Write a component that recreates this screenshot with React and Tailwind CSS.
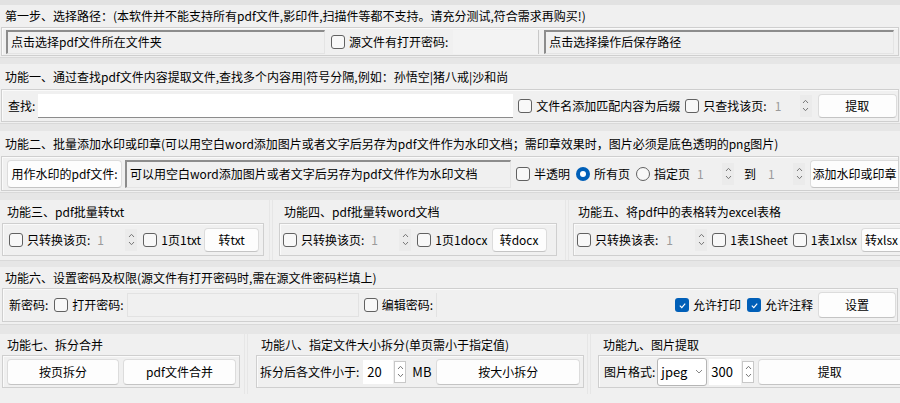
import React from "react";

const font = { fontFamily: '"Noto Sans CJK SC", "Microsoft YaHei", sans-serif' };

function Cb({ checked }) {
  if (checked) {
    return (
      <span className="inline-flex h-[14px] w-[14px] shrink-0 items-center justify-center rounded-[3px] bg-[#005fb8]">
        <svg width="9" height="9" viewBox="0 0 10 10">
          <path d="M2 5.2 L4.2 7.3 L8 3" fill="none" stroke="white" strokeWidth="1.3" />
        </svg>
      </span>
    );
  }
  return <span className="inline-block h-[14px] w-[14px] shrink-0 rounded-[3px] border border-[#616161] bg-[#f8f8f8]" />;
}

function Radio({ checked }) {
  if (checked) {
    return (
      <span className="inline-flex h-[14px] w-[14px] shrink-0 items-center justify-center rounded-full bg-[#005fb8]">
        <span className="h-[6px] w-[6px] rounded-full bg-white" />
      </span>
    );
  }
  return <span className="inline-block h-[14px] w-[14px] shrink-0 rounded-full border border-[#616161] bg-[#f8f8f8]" />;
}

function Arrows({ white }) {
  return (
    <span className={"flex h-[22px] w-[12px] shrink-0 flex-col items-center justify-center gap-[3px] " + (white ? "border border-[#c8c8c8] bg-white" : "bg-[#ebebeb]")}>
      <svg width="7" height="5" viewBox="0 0 7 5">
        <path d="M1 4 L3.5 1.3 L6 4" fill="none" stroke="#777" strokeWidth="1" />
      </svg>
      <svg width="7" height="5" viewBox="0 0 7 5">
        <path d="M1 1 L3.5 3.7 L6 1" fill="none" stroke="#777" strokeWidth="1" />
      </svg>
    </span>
  );
}

function Spin({ value, w }) {
  return (
    <span className={"flex h-[24px] shrink-0 items-center justify-between bg-[#f0f0f0] pl-[3px] " + w}>
      <span className="text-[#9a9a9a]">{value}</span>
      <Arrows />
    </span>
  );
}

function Btn({ children, w }) {
  return (
    <button className={"flex h-[24px] shrink-0 items-center justify-center rounded-[4px] border border-[#dcdcdc] border-b-[#c4c4c4] bg-[#fdfdfd] text-[12px] text-black " + w}>
      {children}
    </button>
  );
}

function Sunken({ children, w }) {
  return (
    <div className={"flex h-[24px] shrink-0 items-center overflow-hidden border-l-2 border-t-2 border-[#8c8c8c] border-r border-b border-r-[#e4e4e4] border-b-[#e4e4e4] bg-[#f0f0f0] pl-[3px] " + w}>
      {children}
    </div>
  );
}

function Title({ children, h }) {
  return <div className={"flex items-center pl-[5px] text-[12px] text-black " + h}>{children}</div>;
}

function Frame({ children, h, cls = "" }) {
  return (
    <div className={"flex items-center overflow-hidden border border-[#cfcfcf] shadow-[inset_1px_1px_0_#fafafa] " + h + " " + cls}>
      {children}
    </div>
  );
}

function Strip({ h }) {
  return <div className={"border-t border-[#d9d9d9] bg-[#e6e6e6] " + h} />;
}

function Check({ checked, label, cls = "" }) {
  return (
    <span className={"flex shrink-0 items-center gap-[4px] " + cls}>
      <Cb checked={checked} />
      <span>{label}</span>
    </span>
  );
}

export default function App() {
  return (
    <div className="h-[403px] w-[900px] overflow-hidden whitespace-nowrap bg-[#f0f0f0] text-[12px] leading-none text-black" style={font}>
      <div className="h-[5px] bg-[#e2e2e2]" />

      {/* step one */}
      <Title h="h-[22px]">第一步、选择路径：(本软件并不能支持所有pdf文件,影印件,扫描件等都不支持。请充分测试,符合需求再购买!)</Title>
      <Frame h="h-[29px]" cls="mx-[1px] px-[4px]">
        <Sunken w="w-[319px]">点击选择pdf文件所在文件夹</Sunken>
        <Check label="源文件有打开密码:" cls="ml-[6px]" />
        <span className="ml-[5px] h-[24px] w-[86px] shrink-0 border-r border-[#c8c8c8] bg-[#f3f3f3]" />
        <Sunken w="ml-[5px] flex-1">点击选择操作后保存路径</Sunken>
      </Frame>
      <div className="h-[1px]" />
      <Strip h="h-[7px]" />

      {/* one */}
      <Title h="h-[25px]">功能一、通过查找pdf文件内容提取文件,查找多个内容用|符号分隔,例如：孙悟空|猪八戒|沙和尚</Title>
      <Frame h="h-[33px]" cls="mx-[1px] pl-[6px] pr-[1px]">
        <span className="shrink-0">查找:</span>
        <span className="ml-[3px] h-[24px] w-[475px] shrink-0 border-b border-[#8c8c8c] bg-white" />
        <Check label="文件名添加匹配内容为后缀" cls="ml-[5px]" />
        <Check label="只查找该页:" cls="ml-[5px]" />
        <Spin value="1" w="ml-[5px] w-[40px]" />
        <Btn w="ml-[6px] flex-1">提取</Btn>
      </Frame>
      <div className="h-[1px]" />
      <Strip h="h-[8px]" />

      {/* two */}
      <Title h="h-[25px]">功能二、批量添加水印或印章(可以用空白word添加图片或者文字后另存为pdf文件作为水印文档；需印章效果时，图片必须是底色透明的png图片)</Title>
      <Frame h="h-[35px]" cls="mx-[1px] pl-[5px]">
        <Btn w="h-[28px] w-[115px]">用作水印的pdf文件:</Btn>
        <Sunken w="ml-[3px] h-[28px] w-[386px]">可以用空白word添加图片或者文字后另存为pdf文件作为水印文档</Sunken>
        <Check label="半透明" cls="ml-[5px]" />
        <span className="ml-[6px] flex shrink-0 items-center gap-[4px]">
          <Radio checked />
          <span>所有页</span>
        </span>
        <span className="ml-[6px] flex shrink-0 items-center gap-[4px]">
          <Radio />
          <span>指定页</span>
        </span>
        <Spin value="1" w="ml-[4px] w-[40px]" />
        <span className="ml-[10px] shrink-0">到</span>
        <Spin value="1" w="ml-[9px] w-[40px]" />
        <Btn w="ml-[5px] h-[28px] flex-1 rounded-r-none border-r-0">添加水印或印章</Btn>
      </Frame>
      <div className="h-[1px]" />
      <Strip h="h-[8px]" />

      {/* three / four / five */}
      <div className="flex h-[60px]">
        <div className="flex w-[269px] shrink-0 flex-col pl-[2px] pr-[5px]">
          <Title h="h-[23px] pl-[3px]">功能三、pdf批量转txt</Title>
          <Frame h="h-[33px]" cls="pl-[6px]">
            <Check label="只转换该页:" />
            <Spin value="1" w="ml-[4px] w-[43px]" />
            <Check label="1页1txt" cls="ml-[6px]" />
            <Btn w="ml-[3px] w-[55px]">转txt</Btn>
          </Frame>
        </div>
        <div className="w-[4px] shrink-0 border-x border-[#e6e6e6]" />
        <div className="flex w-[292px] shrink-0 flex-col pl-[6px] pr-[8px]">
          <Title h="h-[23px] pl-0">功能四、pdf批量转word文档</Title>
          <Frame h="h-[33px]" cls="pl-[3px]">
            <Check label="只转换该页:" />
            <Spin value="1" w="ml-[4px] w-[43px]" />
            <Check label="1页1docx" cls="ml-[6px]" />
            <Btn w="ml-[4px] w-[55px]">转docx</Btn>
          </Frame>
        </div>
        <div className="w-[4px] shrink-0 border-x border-[#e6e6e6]" />
        <div className="flex min-w-0 flex-1 flex-col pl-[4px]">
          <Title h="h-[23px] pl-[1px]">功能五、将pdf中的表格转为excel表格</Title>
          <Frame h="h-[33px]" cls="border-r-0 pl-[3px]">
            <Check label="只转换该表:" />
            <Spin value="1" w="ml-[5px] w-[44px]" />
            <Check label="1表1Sheet" cls="ml-[5px]" />
            <Check label="1表1xlsx" cls="ml-[5px]" />
            <Btn w="ml-[4px] w-[60px] rounded-r-none border-r-0 justify-start pl-[3px]">转xlsx</Btn>
          </Frame>
        </div>
      </div>
      <Strip h="h-[7px]" />

      {/* six */}
      <Title h="h-[21px]">功能六、设置密码及权限(源文件有打开密码时,需在源文件密码栏填上)</Title>
      <Frame h="h-[34px]" cls="mx-[2px] pl-[6px] pr-[1px]">
        <span className="shrink-0">新密码:</span>
        <Check label="打开密码:" cls="ml-[6px]" />
        <span className="ml-[3px] h-[24px] w-[232px] shrink-0 border border-[#e2e2e2] bg-[#f0f0f0]" />
        <Check label="编辑密码:" cls="ml-[5px]" />
        <span className="ml-[3px] h-[24px] w-[236px] shrink-0 border-l border-[#e2e2e2] bg-[#f0f0f0]" />
        <Check checked label="允许打印" cls="ml-[3px]" />
        <Check checked label="允许注释" cls="ml-[6px]" />
        <Btn w="ml-[5px] h-[26px] flex-1">设置</Btn>
      </Frame>
      <div className="h-[2px]" />
      <Strip h="h-[10px]" />

      {/* seven / eight / nine */}
      <div className="flex h-[60px]">
        <div className="flex w-[244px] shrink-0 flex-col pl-[2px] pr-[4px]">
          <Title h="h-[21px] pl-[3px]">功能七、拆分合并</Title>
          <Frame h="h-[33px]" cls="gap-[4px] pl-[4px] pr-[3px]">
            <Btn w="h-[26px] w-[112px]">按页拆分</Btn>
            <Btn w="h-[26px] flex-1">pdf文件合并</Btn>
          </Frame>
        </div>
        <div className="w-[4px] shrink-0 border-x border-[#e6e6e6]" />
        <div className="flex w-[339px] shrink-0 flex-col pl-[8px] pr-[3px]">
          <Title h="h-[21px] pl-[1px]">功能八、指定文件大小拆分(单页需小于指定值)</Title>
          <Frame h="h-[33px]" cls="pl-[3px] pr-[3px]">
            <span className="shrink-0">拆分后各文件小于:</span>
            <span className="ml-[4px] flex h-[24px] w-[30px] shrink-0 items-center bg-white pl-[4px] text-[13px]">20</span>
            <span className="ml-[1px]"><Arrows white /></span>
            <span className="ml-[6px] shrink-0 text-[13px]">MB</span>
            <Btn w="ml-[5px] h-[26px] flex-1">按大小拆分</Btn>
          </Frame>
        </div>
        <div className="w-[4px] shrink-0 border-x border-[#e6e6e6]" />
        <div className="flex min-w-0 flex-1 flex-col pl-[7px]">
          <Title h="h-[21px] pl-[2px]">功能九、图片提取</Title>
          <Frame h="h-[33px]" cls="border-r-0 pl-[5px]">
            <span className="shrink-0">图片格式:</span>
            <span className="ml-[2px] flex h-[28px] w-[50px] shrink-0 items-center justify-between rounded-[3px] border border-[#b5b5b5] bg-white px-[3px] text-[13px]">
              <span>jpeg</span>
              <svg width="8" height="5" viewBox="0 0 8 5">
                <path d="M1 1 L4 4 L7 1" fill="none" stroke="#888" strokeWidth="1" />
              </svg>
            </span>
            <span className="ml-[2px] flex h-[26px] w-[32px] shrink-0 items-center bg-white pl-[2px] text-[13px]">300</span>
            <span className="ml-[1px]"><Arrows white /></span>
            <Btn w="ml-[4px] h-[26px] flex-1 rounded-r-none border-r-0">提取</Btn>
          </Frame>
        </div>
      </div>
    </div>
  );
}
